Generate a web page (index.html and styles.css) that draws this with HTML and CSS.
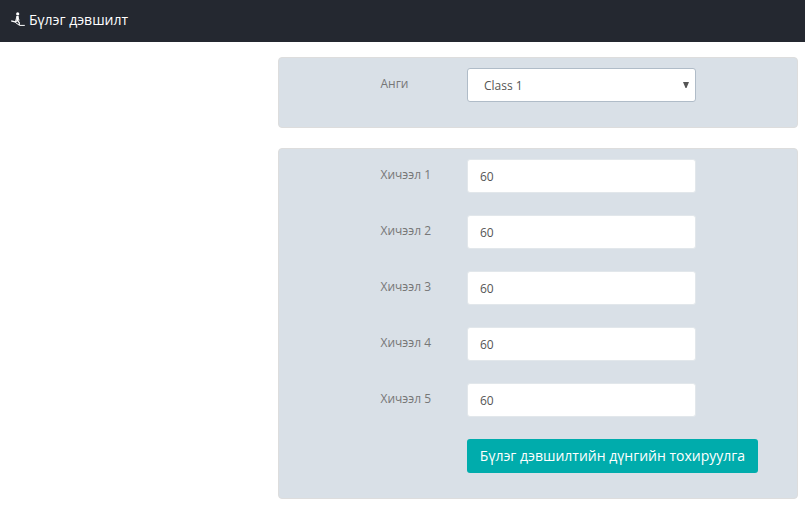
FILE: index.html
```html
<!DOCTYPE html>
<html lang="mn">
<head>
<meta charset="utf-8">
<title>Бүлэг дэвшилт</title>
<link rel="stylesheet" href="styles.css">
</head>
<body>
<header class="bar">
  <svg class="logo" width="16" height="16" viewBox="0 0 16 16" fill="none" stroke="#fff"><circle cx="7.7" cy="1.9" r="1.6" fill="#fff" stroke="none"/><path d="M7.5 4V8.5" stroke-width="2.4"/><path d="M7 4.5L5.5 9M7.8 5L9.3 8.5" stroke-width=".8"/><path d="M1.2 8.8L6 10.2M5.5 10L7.5 8.3L9.3 10.8V13" stroke-width="1.2"/><path d="M5.5 10.5L9.5 13.4H14.8" stroke-width="1"/></svg>
  <h1 class="title">Бүлэг дэвшилт</h1>
</header>
<main class="content">
  <section class="panel panel-class">
    <div class="row"><label class="label">Анги</label><div class="field select">Class 1<svg class="arrow" width="6" height="6" viewBox="0 0 6 6"><path d="M0 0H6L3.5 6H2.5Z" fill="#555"/></svg></div></div>
  </section>
  <section class="panel panel-subjects">
    <div class="row"><label class="label" for="s1">Хичээл 1</label><input class="field" id="s1" value="60"></div>
    <div class="row"><label class="label" for="s2">Хичээл 2</label><input class="field" id="s2" value="60"></div>
    <div class="row"><label class="label" for="s3">Хичээл 3</label><input class="field" id="s3" value="60"></div>
    <div class="row"><label class="label" for="s4">Хичээл 4</label><input class="field" id="s4" value="60"></div>
    <div class="row"><label class="label" for="s5">Хичээл 5</label><input class="field" id="s5" value="60"></div>
    <button class="submit" type="button">Бүлэг дэвшилтийн дүнгийн тохируулга</button>
  </section>
</main>
</body>
</html>
```
FILE: styles.css
```css
* { box-sizing: border-box; }
body { margin: 0; height: 531px; background: #fff; color: #777; font: 12px/17px "Open Sans", "Noto Sans", sans-serif; }
.bar { height: 42px; padding: 0 10px 3px; background: #242830; display: flex; align-items: center; gap: 3px; }
.title { margin: 0; padding-top: 1px; color: #fff; font-size: 14px; font-weight: 400; line-height: 20px; }
.content { margin: 15px 7px 0 278px; display: flex; flex-direction: column; gap: 20px; }
.panel { background: #d9e0e7; border: 1px solid #ddd; border-radius: 4px; padding: 10px 0 0 101px; }
.panel-class { height: 71px; }
.panel-subjects { height: 351px; }
.row { height: 34px; margin-bottom: 22px; display: flex; }
.label { width: 87px; padding: 7px 0 0 0.5px; }
.field { width: 229px; height: 34px; padding: 6px 12px; border: 1px solid #e2e7eb; border-radius: 3px; background: #fff; color: #555; font: inherit; }
.select { display: flex; align-items: center; justify-content: space-between; padding: 0 6px 0 16px; border-color: #b0bcc8; }
.arrow { margin-bottom: 1px; }
.submit { display: block; margin-left: 87px; width: 291px; height: 34px; padding: 0; border: 0; border-radius: 3px; background: #00acac; color: #fff; font: 14px/20px "Open Sans", "Noto Sans", sans-serif; }
```
